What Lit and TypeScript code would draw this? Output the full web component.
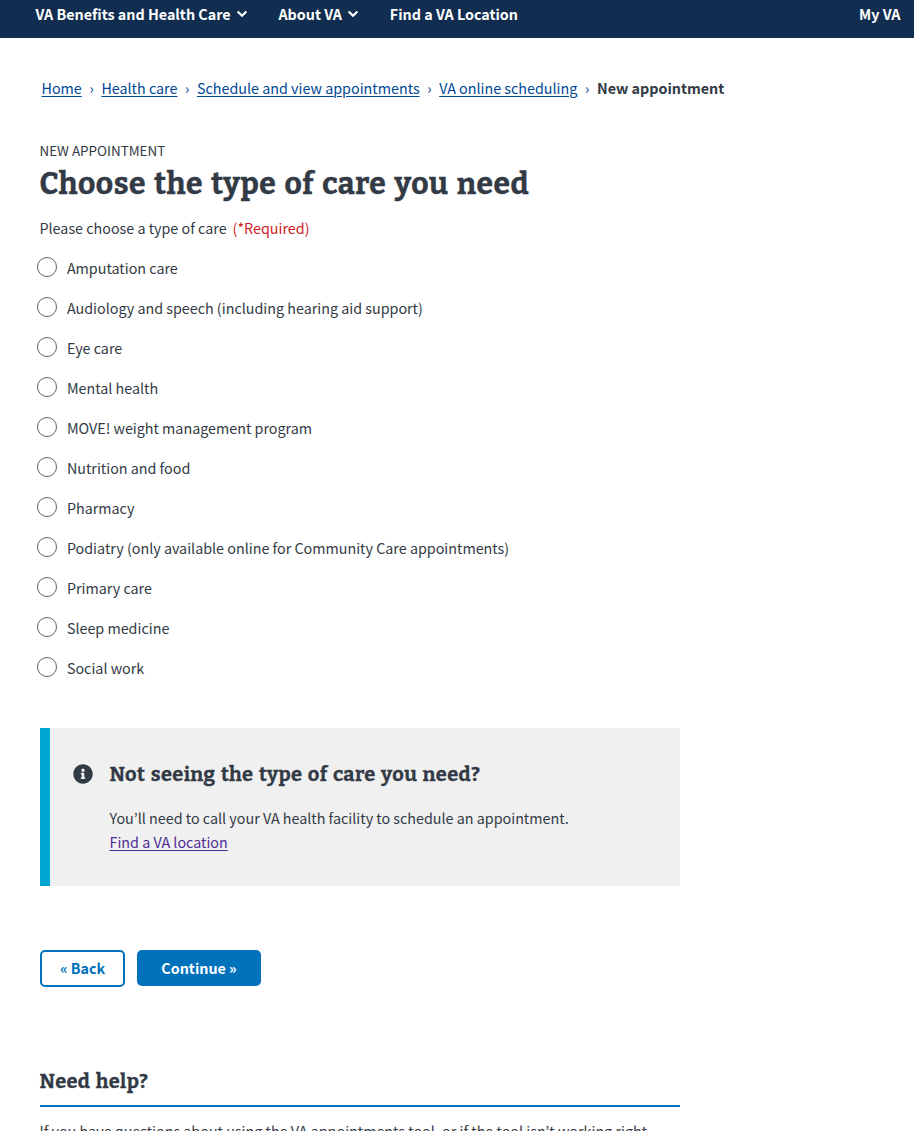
import { LitElement, html, css } from "lit";
import { customElement } from "lit/decorators.js";

const CARE_TYPES = [
  "Amputation care",
  "Audiology and speech (including hearing aid support)",
  "Eye care",
  "Mental health",
  "MOVE! weight management program",
  "Nutrition and food",
  "Pharmacy",
  "Podiatry (only available online for Community Care appointments)",
  "Primary care",
  "Sleep medicine",
  "Social work",
];

const CRUMBS = ["Home", "Health care", "Schedule and view appointments", "VA online scheduling"];

const chevron = html`<svg class="chevron" viewBox="0 0 12 8" width="12" height="8" aria-hidden="true">
  <path d="M2.4 2.3 L6 5.7 L9.6 2.3" fill="none" stroke="currentColor" stroke-width="2.2" stroke-linecap="square" />
</svg>`;

@customElement("app-root")
export class AppRoot extends LitElement {
  static styles = css`
    :host {
      display: block;
      height: 1131px;
      overflow: hidden;
      background: #fff;
      color: #323a45;
      font-family: "Noto Sans CJK JP", "Noto Sans CJK SC", sans-serif;
      font-size: 14.32px;
      line-height: 24px;
    }
    * { box-sizing: border-box; }
    a { color: #004795; text-decoration: underline; text-underline-offset: 1.6px; text-decoration-thickness: 1px; }
    .nav {
      display: flex;
      height: 38px;
      padding: 2px 13.5px 0 35.5px;
      background: #112e51;
      color: #fff;
      font-weight: 700;
    }
    .item { display: flex; margin-right: 30.6px; }
    .chevron { margin: 8px 0 0 5.3px; }
    .mine { margin-left: auto; }
    .crumbs { display: flex; padding: 38px 0 0 41.5px; white-space: pre; }
    .sep { width: 19.6px; text-align: center; color: #004795; }
    .current { font-weight: 700; }
    main { width: 640px; margin-left: 40px; }
    .eyebrow { margin: 38px 0 0 -0.5px; font-size: 13.43px; }
    h1, h2, h3 {
      margin: 0;
      font-family: Bitter, "DejaVu Serif Condensed", "DejaVu Serif", serif;
      font-weight: 700;
      letter-spacing: 0.018em;
      word-spacing: 0.075em;
      -webkit-text-stroke: 0.014em currentColor;
    }
    h1 { font-size: 30px; line-height: 38px; margin: 3px 0 0 -0.5px; white-space: nowrap; }
    .prompt { margin: 13px 0 0 -0.5px; }
    .required { color: #cd2026; margin-left: 6px; }
    .option { display: flex; align-items: center; height: 24px; margin: 16px 0 0 -3px; }
    .radio { width: 20px; height: 20px; border: 1px solid #5b616b; border-radius: 50%; margin: 0 9.9px 3px 0; }
    .alert { display: flex; height: 158px; margin-top: 48px; padding: 33px 0 0 23.4px; border-left: 10px solid #00a6d2; background: #f0f0f0; }
    .info { flex: none; margin: 3px 16.1px 0 0; }
    h2, h3 { font-size: 20px; line-height: 26px; white-space: nowrap; }
    .alert p { margin: 19px 0 0; }
    .visited { color: #4c2c92; }
    .buttons { display: flex; gap: 12px; margin-top: 64px; }
    .btn { height: 36px; width: 124px; border: 0; padding: 0; border-radius: 5px; background: #0071bb; color: #fff; font: inherit; font-weight: 700; }
    .back { width: 85px; height: 37px; padding-bottom: 1px; border: 2px solid #0071bb; background: #fff; color: #0071bb; }
    .help { margin-top: 81px; padding-bottom: 11px; border-bottom: 2px solid #0071bb; text-indent: -0.5px; }
    .helptext { margin: 12px 0 0 -0.5px; white-space: nowrap; }
  `;

  render() {
    return html`
      <nav class="nav">
        <span class="item">VA Benefits and Health Care${chevron}</span>
        <span class="item">About VA${chevron}</span>
        <span class="item">Find a VA Location</span>
        <span class="mine">My VA</span>
      </nav>
      <div class="crumbs">${CRUMBS.map((c) => html`<a>${c}</a><span class="sep">›</span>`)}<span class="current">New appointment</span></div>
      <main>
        <div class="eyebrow">NEW APPOINTMENT</div>
        <h1>Choose the type of care you need</h1>
        <div class="prompt">Please choose a type of care<span class="required">(*Required)</span></div>
        ${CARE_TYPES.map((t) => html`<label class="option"><span class="radio"></span>${t}</label>`)}
        <section class="alert">
          <svg class="info" viewBox="0 0 512 512" width="20" height="20" aria-hidden="true">
            <path fill="#323a45" d="M256 8C119 8 8 119 8 256s111 248 248 248 248-111 248-248S393 8 256 8zm0 110a42 42 0 1 1 0 84 42 42 0 0 1 0-84zm56 254a12 12 0 0 1-12 12h-88a12 12 0 0 1-12-12v-24a12 12 0 0 1 12-12h12v-64h-12a12 12 0 0 1-12-12v-24a12 12 0 0 1 12-12h64a12 12 0 0 1 12 12v100h12a12 12 0 0 1 12 12z" />
          </svg>
          <div>
            <h2>Not seeing the type of care you need?</h2>
            <p>You’ll need to call your VA health facility to schedule an appointment.<br /><a class="visited">Find a VA location</a></p>
          </div>
        </section>
        <div class="buttons"><button class="btn back">« Back</button><button class="btn">Continue »</button></div>
        <h3 class="help">Need help?</h3>
        <p class="helptext">If you have questions about using the VA appointments tool, or if the tool isn’t working right</p>
      </main>
    `;
  }
}
